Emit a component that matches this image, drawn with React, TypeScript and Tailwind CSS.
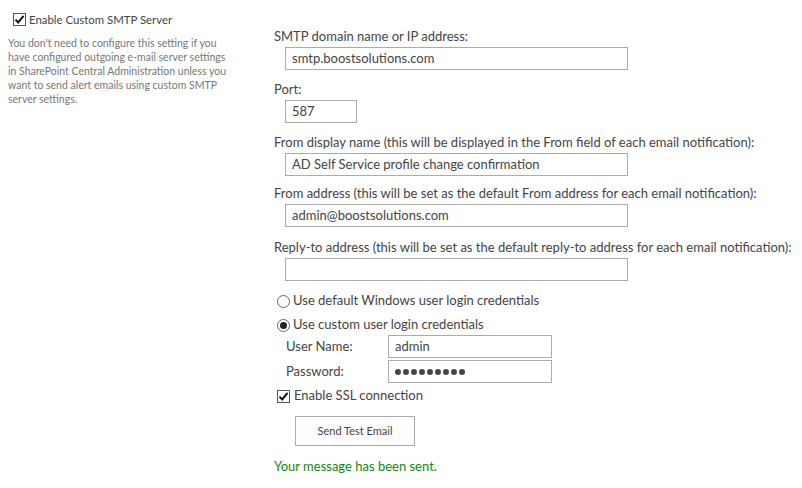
import React from "react";

const font = { fontFamily: "Lato, 'Open Sans', sans-serif" };

function CheckBox() {
  return (
    <div className="w-[13px] h-[13px] border border-[#555] bg-white flex items-center justify-center shrink-0">
      <svg width="11" height="11" viewBox="0 0 11 11">
        <path d="M1.5 5.6 L4.2 8.4 L9.6 1.8" fill="none" stroke="#111" strokeWidth="2" />
      </svg>
    </div>
  );
}

function Radio({ checked }: { checked?: boolean }) {
  return (
    <div className="w-[13px] h-[13px] rounded-full border border-[#666] bg-white flex items-center justify-center shrink-0">
      {checked && <div className="w-[7px] h-[7px] rounded-full bg-[#222]" />}
    </div>
  );
}

function Box({ w, value }: { w: string; value?: string }) {
  return (
    <div className={`${w} h-[23px] border border-[#ababab] bg-white pl-[6px] flex items-center text-[13px] text-[#444] leading-none`}>
      {value}
    </div>
  );
}

function Field({ label, value, w, mb }: { label: string; value?: string; w: string; mb: string }) {
  return (
    <div className={mb}>
      <div className="h-[18px] leading-[18px] text-[13px] text-[#444] whitespace-nowrap">{label}</div>
      <div className="mt-[2px] ml-[11px]">
        <Box w={w} value={value} />
      </div>
    </div>
  );
}

export default function App() {
  return (
    <div className="w-[802px] h-[488px] bg-white flex overflow-hidden" style={font}>
      <div className="w-[274px] shrink-0 pl-[8px] pt-[12px]">
        <div className="flex items-center h-[15px] pl-[5px] gap-[3px]">
          <CheckBox />
          <span className="text-[11.4px] text-[#444] leading-none">Enable Custom SMTP Server</span>
        </div>
        <div className="mt-[9px] text-[10.5px] leading-[14px] text-[#777]">
          <div>You don't need to configure this setting if you</div>
          <div>have configured outgoing e-mail server settings</div>
          <div>in SharePoint Central Administration unless you</div>
          <div>want to send alert emails using custom SMTP</div>
          <div>server settings.</div>
        </div>
      </div>
      <div className="flex-1 pt-[27px]">
        <Field label="SMTP domain name or IP address:" value="smtp.boostsolutions.com" w="w-[343px]" mb="mb-[10px]" />
        <Field label="Port:" value="587" w="w-[72px]" mb="mb-[10px]" />
        <Field
          label="From display name (this will be displayed in the From field of each email notification):"
          value="AD Self Service profile change confirmation"
          w="w-[343px]"
          mb="mb-[8px]"
        />
        <Field
          label="From address (this will be set as the default From address for each email notification):"
          value="admin@boostsolutions.com"
          w="w-[343px]"
          mb="mb-[11px]"
        />
        <Field
          label="Reply-to address (this will be set as the default reply-to address for each email notification):"
          w="w-[343px]"
          mb="mb-[10px]"
        />
        <div className="flex items-center h-[20px] pl-[3px] gap-[3px] text-[13px] text-[#444]">
          <Radio />
          <span>Use default Windows user login credentials</span>
        </div>
        <div className="flex items-center h-[20px] mt-[4px] pl-[3px] gap-[3px] text-[13px] text-[#444]">
          <Radio checked />
          <span>Use custom user login credentials</span>
        </div>
        <div className="pl-[12px] flex flex-col gap-[2px]">
          <div className="flex items-center">
            <div className="w-[102px] text-[13px] text-[#444]">User Name:</div>
            <Box w="w-[164px]" value="admin" />
          </div>
          <div className="flex items-center">
            <div className="w-[102px] text-[13px] text-[#444]">Password:</div>
            <div className="w-[164px] h-[23px] border border-[#ababab] bg-white pl-[6px] flex items-center gap-[2px]">
              {Array.from({ length: 9 }).map((_, i) => (
                <div key={i} className="w-[6px] h-[6px] rounded-full bg-[#444]" />
              ))}
            </div>
          </div>
        </div>
        <div className="flex items-center h-[20px] mt-[3px] pl-[3px] gap-[4px] text-[13px] text-[#444]">
          <CheckBox />
          <span>Enable SSL connection</span>
        </div>
        <div className="ml-[21px] mt-[10px] w-[120px] h-[30px] border border-[#ababab] bg-[#fdfdfd] flex items-center justify-center text-[11px] text-[#444]">
          Send Test Email
        </div>
        <div className="mt-[11px] h-[18px] leading-[18px] text-[13px] text-[#118811]">Your message has been sent.</div>
      </div>
    </div>
  );
}
